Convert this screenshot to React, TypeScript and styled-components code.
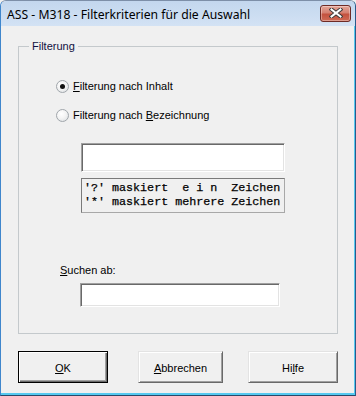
import styled, { createGlobalStyle } from 'styled-components';

const GlobalStyle = createGlobalStyle`
  html, body {
    margin: 0;
    padding: 0;
    background: #f0f0f0;
  }
  body {
    width: 356px;
    height: 396px;
    overflow: hidden;
  }
`;

const Window = styled.div`
  width: 356px;
  height: 396px;
  box-sizing: border-box;
  display: flex;
  flex-direction: column;
  background: #f0f0f0;
  border: 1px solid #7d8fa8;
  border-left-color: #3f86cc;
  border-right-color: #2a5a8a;
  border-bottom-color: #2a4868;
  border-radius: 6px 6px 0 0;
  box-shadow: inset -1px -2px 0 #55c9f0;
  overflow: hidden;
  font-family: 'Liberation Sans', Arial, sans-serif;
  font-size: 11px;
  color: #000;
`;

const TitleBar = styled.div`
  height: 25px;
  flex: none;
  display: flex;
  align-items: center;
  justify-content: space-between;
  padding: 0 4px 0 6px;
  background: linear-gradient(#c3d7ee, #d3e2f4);
`;

const TitleText = styled.span`
  font-family: 'Noto Sans', 'Open Sans', sans-serif;
  font-size: 12.2px;
  color: #000;
  padding-top: 2px;
`;

const CloseButton = styled.div`
  width: 31px;
  height: 17px;
  margin-top: -1px;
  box-sizing: border-box;
  border: 1px solid #6e2b26;
  border-radius: 3px;
  background: linear-gradient(#e4a598 0%, #d58071 45%, #c4523f 55%, #cf6a55 100%);
  box-shadow: inset 0 0 0 1px rgba(255, 255, 255, 0.35);
  display: flex;
  align-items: center;
  justify-content: center;
`;

const Client = styled.div`
  flex: 1;
  display: flex;
  flex-direction: column;
  padding: 13px 0 0 17px;
`;

const GroupBox = styled.fieldset`
  margin: 0;
  padding: 0;
  min-width: 0;
  width: 320px;
  height: 295px;
  box-sizing: border-box;
  border: 1px solid #c4c9cc;
  display: flex;
  flex-direction: column;
`;

const Legend = styled.legend`
  margin-left: 10px;
  padding: 0 3px;
  line-height: 14px;
  color: #101040;
`;

const RadioRow = styled.label<{ $top: number }>`
  display: flex;
  align-items: center;
  gap: 4px;
  height: 16px;
  margin: ${p => p.$top}px 0 0 37px;
`;

const RadioCircle = styled.span<{ $checked?: boolean }>`
  width: 13px;
  height: 13px;
  box-sizing: border-box;
  border-radius: 50%;
  border: 1px solid #a0a6ab;
  background: radial-gradient(circle at 40% 35%, #ffffff 0%, #f4f4f4 45%, #d8dcdf 100%);
  display: flex;
  align-items: center;
  justify-content: center;

  &::after {
    content: '';
    width: 5px;
    height: 5px;
    border-radius: 50%;
    background: #111;
    display: ${p => (p.$checked ? 'block' : 'none')};
  }
`;

const Mn = styled.span`
  text-decoration: underline;
  text-underline-offset: 1px;
`;

const SunkenInput = styled.div<{ $left: number; $top: number; $width: number; $height: number }>`
  margin: ${p => p.$top}px 0 0 ${p => p.$left}px;
  width: ${p => p.$width}px;
  height: ${p => p.$height}px;
  box-sizing: border-box;
  background: #fff;
  border: 1px solid;
  border-color: #a0a0a0 #ffffff #ffffff #a0a0a0;
  box-shadow: inset 1px 1px 0 #696969, inset -1px -1px 0 #e3e3e3;
`;

const HintBox = styled.div`
  margin: 6px 0 0 62px;
  width: 204px;
  height: 35px;
  box-sizing: border-box;
  border: 1px solid;
  border-color: #7a7a7a #a8a8a8 #a8a8a8 #7a7a7a;
  padding: 2px 0 0 2px;
  font-family: 'Liberation Mono', 'Courier New', monospace;
  font-size: 11.7px;
  line-height: 14px;
  white-space: pre;
  color: #000;
  -webkit-text-stroke: 0.25px #000;
`;

const FieldLabel = styled.div`
  height: 16px;
  line-height: 16px;
  margin: 49px 0 0 41px;
`;

const ButtonRow = styled.div`
  display: flex;
  align-items: flex-start;
  margin-top: 17px;
  width: 320px;
`;

const Button = styled.div<{ $width: number; $default?: boolean; $gap?: number }>`
  width: ${p => p.$width}px;
  height: 32px;
  margin-left: ${p => p.$gap ?? 0}px;
  box-sizing: border-box;
  display: flex;
  align-items: center;
  justify-content: center;
  background: #f0f0f0;
  border: 1px solid ${p => (p.$default ? '#000' : '#e3e3e3')};
  box-shadow: ${p =>
    p.$default
      ? 'inset 1px 1px 0 #fff, inset -1px -1px 0 #696969, inset -2px -2px 0 #a0a0a0'
      : 'inset 1px 1px 0 #fff, inset -1px -1px 0 #a0a0a0'};
  ${p => (p.$default ? '' : 'border-right-color: #696969; border-bottom-color: #696969;')}
  padding-top: 1px;
`;

export default function App() {
  return (
    <>
      <GlobalStyle />
      <Window>
        <TitleBar>
          <TitleText>ASS - M318 - Filterkriterien für die Auswahl</TitleText>
          <CloseButton>
            <svg width="14" height="10" viewBox="0 0 14 10">
              <path d="M2.5 1.5 L11.5 8.5 M11.5 1.5 L2.5 8.5" stroke="#3a3a3a" strokeWidth="4" strokeLinecap="square" />
              <path d="M2.5 1.5 L11.5 8.5 M11.5 1.5 L2.5 8.5" stroke="#ffffff" strokeWidth="2" strokeLinecap="square" />
            </svg>
          </CloseButton>
        </TitleBar>

        <Client>
          <GroupBox>
            <Legend>Filterung</Legend>
            <RadioRow $top={25}>
              <RadioCircle $checked />
              <span><Mn>F</Mn>ilterung nach Inhalt</span>
            </RadioRow>
            <RadioRow $top={13}>
              <RadioCircle />
              <span>Filterung nach <Mn>B</Mn>ezeichnung</span>
            </RadioRow>
            <SunkenInput $left={62} $top={20} $width={204} $height={29} />
            <HintBox>
              {"'?' maskiert  e i n  Zeichen\n'*' maskiert mehrere Zeichen"}
            </HintBox>
            <FieldLabel><Mn>S</Mn>uchen ab:</FieldLabel>
            <SunkenInput $left={61} $top={5} $width={200} $height={24} />
          </GroupBox>

          <ButtonRow>
            <Button $width={90} $default><span><Mn>O</Mn>K</span></Button>
            <Button $width={85} $gap={30}><span><Mn>A</Mn>bbrechen</span></Button>
            <Button $width={90} $gap={25}><span>Hi<Mn>l</Mn>fe</span></Button>
          </ButtonRow>
        </Client>
      </Window>
    </>
  );
}
